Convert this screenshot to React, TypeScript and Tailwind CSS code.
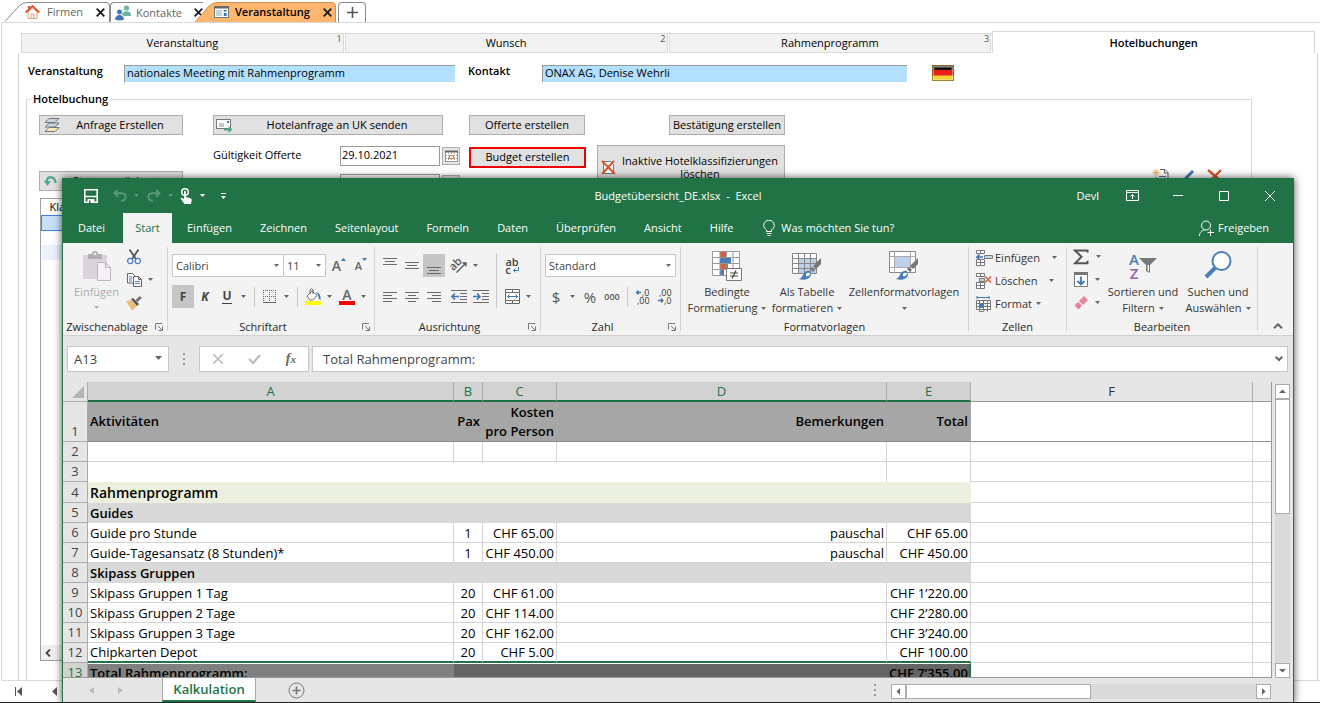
import type { ReactNode } from "react";

interface Row {
  nr: number;
  name: string;
  pax: string;
  cost: string;
  note: string;
  total: string;
  kind?: "empty" | "merged" | "title" | "section";
}

const rows: Row[] = [
  { nr: 2, name: "", pax: "", cost: "", note: "", total: "", kind: "empty" },
  { nr: 3, name: "", pax: "", cost: "", note: "", total: "", kind: "merged" },
  { nr: 4, name: "Rahmenprogramm", pax: "", cost: "", note: "", total: "", kind: "title" },
  { nr: 5, name: "Guides", pax: "", cost: "", note: "", total: "", kind: "section" },
  { nr: 6, name: "Guide pro Stunde", pax: "1", cost: "CHF 65.00", note: "pauschal", total: "CHF 65.00" },
  { nr: 7, name: "Guide-Tagesansatz (8 Stunden)*", pax: "1", cost: "CHF 450.00", note: "pauschal", total: "CHF 450.00" },
  { nr: 8, name: "Skipass Gruppen", pax: "", cost: "", note: "", total: "", kind: "section" },
  { nr: 9, name: "Skipass Gruppen 1 Tag", pax: "20", cost: "CHF 61.00", note: "", total: "CHF 1’220.00" },
  { nr: 10, name: "Skipass Gruppen 2 Tage", pax: "20", cost: "CHF 114.00", note: "", total: "CHF 2’280.00" },
  { nr: 11, name: "Skipass Gruppen 3 Tage", pax: "20", cost: "CHF 162.00", note: "", total: "CHF 3’240.00" },
  { nr: 12, name: "Chipkarten Depot", pax: "20", cost: "CHF 5.00", note: "", total: "CHF 100.00" },
];

const menu = ["Einfügen", "Zeichnen", "Seitenlayout", "Formeln", "Daten", "Überprüfen", "Ansicht", "Hilfe"];

/*-------------------- Small shared pieces ----------------------*/
function Caret({ className = "text-[#666]" }: { className?: string }) {
  return (
    <svg width="5" height="3" viewBox="0 0 5 3" className={`shrink-0 ${className}`}>
      <path d="M0 0h5L2.5 3z" fill="currentColor" />
    </svg>
  );
}

function Cross() {
  return (
    <svg width="9" height="9" viewBox="0 0 9 9" stroke="#1a1a1a" strokeWidth="1.8">
      <path d="M.7.7l7.6 7.6M8.3.7L.7 8.3" />
    </svg>
  );
}

function Launcher() {
  return (
    <svg width="8" height="8" viewBox="0 0 8 8" fill="none" stroke="#777" className="absolute right-1 top-1">
      <path d="M.5 6.5V.5H7M3 3l4 4M7.5 3.5v4h-4" />
    </svg>
  );
}

function Group({ label, className, launcher, children }: { label: string; className: string; launcher?: boolean; children: ReactNode }) {
  return (
    <section className={`flex shrink-0 flex-col ${className}`}>
      <div className="flex h-[76px] w-full">{children}</div>
      <div className={`relative h-4 text-center leading-4 text-[#262626] ${launcher ? "pr-4" : ""}`}>
        {label}
        {launcher && <Launcher />}
      </div>
    </section>
  );
}

function Divider() {
  return <div className="my-1 w-px shrink-0 bg-[#d4d4d4]" />;
}

function Tool({ label, active, className = "w-[22px]", children }: { label: string; active?: boolean; className?: string; children: ReactNode }) {
  return (
    <button aria-label={label} className={`flex h-[23px] shrink-0 items-center justify-center ${active ? "bg-[#c6c6c6]" : ""} ${className}`}>
      {children}
    </button>
  );
}

function Lines({ d }: { d: string }) {
  return (
    <svg width="16" height="16" viewBox="0 0 16 16" stroke="#6a6a6a">
      <path d={d} />
    </svg>
  );
}

function Picker({ label, value, className }: { label: string; value: string; className: string }) {
  return (
    <label className={`relative block h-[23px] border border-[#c6c6c6] bg-white ${className}`}>
      <select aria-label={label} className="h-full w-full appearance-none bg-transparent pl-[3px] text-[#444] outline-none">
        <option>{value}</option>
      </select>
      <span className="pointer-events-none absolute right-1 top-[9px]">
        <Caret />
      </span>
    </label>
  );
}

function Brush() {
  return (
    <>
      <path d="M29 7v6l-5 5-3-3z" fill="#777" />
      <path d="M20 16l3 3-2 2-3-3z" fill="#777" />
      <path d="M18 20c-3-1-6 1-7 4-1 2-2 3-4 4 5 2 11 0 12-4z" fill="#4a7ebb" />
      <path d="M14 23c2-2 4-1 4 0s-2 3-4 2" fill="#fff" />
    </>
  );
}

/*-------------------- Office app behind ----------------------*/
function CalendarButton() {
  return (
    <button aria-label="Kalender" className="flex h-[18px] w-[18px] items-center justify-center border border-[#adadad] bg-[#e6e6e6]">
      <svg width="13" height="13" viewBox="0 0 13 13" fill="none">
        <rect x=".5" y="1.5" width="12" height="10" fill="#fff" stroke="#999" />
        <path d="M0 1.500h13" stroke="#666" strokeWidth="2" />
        <path d="M3.500 3v9M6.500 3v9M9.500 3v9M1 5.500h11M1 8.500h11" stroke="#999" strokeDasharray="1 1" />
        <rect x="4.500" y="5.500" width="4" height="3" fill="#fff" stroke="#e8833a" />
      </svg>
    </button>
  );
}

function AppButton({ className, children }: { className: string; children: ReactNode }) {
  return <button className={`relative h-5 border border-[#adadad] bg-[#e1e1e1] leading-4 ${className}`}>{children}</button>;
}

function WindowTabs() {
  return (
    <nav className="flex h-[22px] items-end text-[#666]">
      <button className="relative ml-[5px] flex h-5 w-[105px] items-center">
        <svg width="105" height="20" viewBox="0 0 105 20" fill="#fff" stroke="#8a8a8a" className="absolute inset-0">
          <path d="M0 19.500L14 4Q18 .5 22 .5H102Q104.500 1 104.500 4V20" />
        </svg>
        <svg width="15" height="14" viewBox="0 0 15 14" className="relative ml-5">
          <path d="M3 7v6.500h9V7L7.500 3z" fill="#fff" stroke="#e0a070" />
          <path d="M.7 7.500L7.500 1l6.800 6.500" fill="none" stroke="#dd5335" strokeWidth="1.800" />
          <path d="M3 1h2v3H3z" fill="#dd5335" />
          <path d="M6 9h3v4.500H6z" fill="#fff" stroke="#e0a070" />
        </svg>
        <span className="relative ml-[7px]">Firmen</span>
        <span className="relative ml-auto mr-[5px]">
          <Cross />
        </span>
      </button>
      <button className="flex h-5 w-[93px] items-center rounded-tl-[4px] border-l border-t border-[#8a8a8a]">
        <svg width="16" height="16" viewBox="0 0 16 16" className="ml-1">
          <circle cx="11.500" cy="3" r="2.600" fill="#6db3a0" />
          <path d="M7 10c0-5 9-5 9 0v1H9z" fill="#6db3a0" />
          <circle cx="4.500" cy="7" r="2.800" fill="#3f74b5" stroke="#fff" strokeWidth=".6" />
          <path d="M0 14.500c0-6 9-6 9 0q-4.500 2-9 0z" fill="#3f74b5" />
        </svg>
        <span className="ml-[5px]">Kontakte</span>
        <span className="ml-auto">
          <Cross />
        </span>
      </button>
      <button className="relative -ml-2 flex h-5 w-[141px] items-center font-semibold text-black">
        <svg width="141" height="20" viewBox="0 0 141 20" fill="#fdb66e" stroke="#c98f55" className="absolute inset-0">
          <path d="M0 20L14 4Q18 .5 22 .5H137Q140.500 .5 140.500 4V20" />
        </svg>
        <svg width="15" height="12" viewBox="0 0 15 12" className="relative ml-[19px]">
          <rect x=".5" y=".5" width="14" height="11" fill="#fff" stroke="#777" />
          <path d="M0 1.500h15" stroke="#666" strokeWidth="2" />
          <path d="M2 5h6M2 7h6M2 9h6" stroke="#8ab" />
          <path d="M10.500 4v1.500M10.500 7v3M12 4v1.500M12 7v3" stroke="#3f74b5" strokeWidth="1.500" />
        </svg>
        <span className="relative ml-1.5">Veranstaltung</span>
        <span className="relative ml-auto mr-1">
          <Cross />
        </span>
      </button>
      <button aria-label="Neuer Tab" className="ml-0.5 flex h-5 w-7 items-center justify-center rounded-t-[4px] border border-b-0 border-[#8a8a8a]">
        <svg width="11" height="11" viewBox="0 0 11 11" stroke="#555" strokeWidth="1.600">
          <path d="M5.500 0v11M0 5.500h11" />
        </svg>
      </button>
    </nav>
  );
}

function PageTab({ label, nr, color = "" }: { label: string; nr: string; color?: string }) {
  return (
    <button className="relative mr-px flex h-5 flex-1 items-center justify-center border border-[#d9d9d9] bg-[#f2f2f2]">
      {label}
      <sup className={`absolute right-px top-0 text-[9px] leading-[9px] text-[#555] ${color}`}>{nr}</sup>
    </button>
  );
}

function EventForm() {
  return (
    <fieldset className="ml-[7px] mr-[65px] mt-[9px] flex min-w-0 flex-1 flex-col border border-b-0 border-[#d9d9d9]">
      <legend className="ml-1 px-0.5 font-semibold leading-4">Hotelbuchung</legend>
      <div className="ml-3 mt-2 flex h-[83px] items-start">
        <div className="flex w-[174px] flex-col gap-9">
          <AppButton className="w-[144px] pl-[18px]">
            <svg width="18" height="16" viewBox="0 0 18 16" stroke="#777" className="absolute left-[3px] top-px">
              <path d="M6 10.500h10l-4 4H2z" fill="#f7ecb5" />
              <path d="M6 6h10l-4 4H2z" fill="#c5d5e8" />
              <path d="M6 1.500h10l-4 4H2z" fill="#c5d5e8" />
            </svg>
            Anfrage Erstellen
          </AppButton>
          <AppButton className="w-[144px] pl-[26px]">
            <svg width="14" height="12" viewBox="0 0 14 12" fill="none" className="absolute left-1 top-[3px]">
              <path d="M2.500 7C3 0 11 1 11.500 8" stroke="#55a892" strokeWidth="2.400" />
              <path d="M0 6h7l-3.500 5z" fill="#55a892" />
            </svg>
            Status zurücksetzen
          </AppButton>
        </div>
        <div className="flex w-64 flex-col">
          <AppButton className="w-[230px] pl-[18px]">
            <svg width="18" height="15" viewBox="0 0 18 15" className="absolute left-[2px] top-[2px]">
              <rect x=".5" y="1.500" width="14" height="9" fill="#fff" stroke="#777" />
              <path d="M3 6h5M3 8h5" stroke="#888" />
              <rect x="11" y="3" width="2" height="2" fill="#3f74b5" />
              <path d="M8 11.500h6" stroke="#4fa88c" strokeWidth="2" />
              <path d="M12.500 8l4 3.500-4 3.500z" fill="#4fa88c" />
            </svg>
            Hotelanfrage an UK senden
          </AppButton>
          <div className="mt-[11px] flex items-center">
            <label htmlFor="validity" className="w-[127px] pb-0.5">
              Gültigkeit Offerte
            </label>
            <input id="validity" defaultValue="29.10.2021" className="mr-[2px] h-5 w-[100px] border border-[#999] bg-white px-px pb-[3px] outline-none" />
            <CalendarButton />
          </div>
          <div className="mt-2 flex items-center">
            <label htmlFor="reply" className="w-[127px]">
              Rückmeldung bis
            </label>
            <input id="reply" className="mr-[2px] h-5 w-[100px] border border-[#999] bg-white outline-none" />
            <CalendarButton />
          </div>
        </div>
        <div className="flex w-32 flex-col">
          <AppButton className="w-[116px]">Offerte erstellen</AppButton>
          <button className="mt-3 h-[21px] w-[117px] border-2 border-[#f00000] bg-[#e1e1e1] pb-px leading-4">Budget erstellen</button>
        </div>
        <div className="flex w-[188px] flex-col items-end">
          <AppButton className="w-[116px]">Bestätigung erstellen</AppButton>
          <button className="relative mt-2.5 h-11 w-full border border-[#adadad] bg-[#e1e1e1] pl-[18px] leading-[13px]">
            <svg width="15" height="15" viewBox="0 0 15 15" className="absolute left-[3px] top-3.5">
              <path d="M2.500 1.500h7l3 3v9h-10z" fill="#fff" stroke="#777" />
              <path d="M1 1l13 13M13 1L1 14" stroke="#d9532c" strokeWidth="2" />
            </svg>
            Inaktive Hotelklassifizierungen löschen
          </button>
        </div>
        <div className="ml-auto mr-7 flex items-start gap-3 self-end">
          <button aria-label="Neu">
            <svg width="17" height="30" viewBox="0 0 17 30" fill="none">
              <path d="M4 1v7M.5 4.500h7M1.500 2l5 5M6.500 2l-5 5" stroke="#f0b060" />
              <path d="M8 1.500h5l3 3V16H4V9M12.500 1.500V5H16" stroke="#666" />
              <path d="M7 8.500h7M7 11.500h7" stroke="#3f74b5" />
            </svg>
          </button>
          <button aria-label="Bearbeiten">
            <svg width="14" height="30" viewBox="0 0 14 30">
              <path d="M11 2l2 2-9 9-3 1 1-3z" fill="#3f74b5" />
            </svg>
          </button>
          <button aria-label="Löschen">
            <svg width="16" height="30" viewBox="0 0 16 30" stroke="#d9532c" strokeWidth="2.400">
              <path d="M1 2l13 11M14 2L2 14" />
            </svg>
          </button>
        </div>
      </div>
      <div className="ml-[13px] mr-5 flex flex-1 flex-col border border-b-0 border-[#a0a0a0]">
        <table className="w-full text-left">
          <thead>
            <tr className="h-4">
              <th className="pl-2 font-normal leading-[15px]">Klassifizierung</th>
            </tr>
          </thead>
          <tbody>
            <tr className="h-[15px]">
              <td className="border border-[#3a84dc] bg-[#c7dff7]" />
            </tr>
            <tr className="h-[15px]">
              <td />
            </tr>
            <tr className="h-[15px]">
              <td className="bg-[#e9f2fd]" />
            </tr>
          </tbody>
        </table>
        <div className="mt-auto flex h-[15px] items-center bg-[#f0f0f0] pl-1">
          <svg width="6" height="8" viewBox="0 0 6 8" fill="none" stroke="#444" strokeWidth="1.800">
            <path d="M5 .5L1.500 4 5 7.500" />
          </svg>
        </div>
      </div>
      <div className="ml-[13px] mr-5 h-5 border-t border-[#a0a0a0]" />
    </fieldset>
  );
}

function OfficeApp() {
  return (
    <div className="flex h-full flex-col">
      <WindowTabs />
      <div className="ml-px flex flex-1 flex-col border border-r-0 border-[#d9d9d9]">
        <div className="ml-[19px] mr-[5px] mt-2 flex h-[22px] items-end">
          <PageTab label="Veranstaltung" nr="1" color="text-[#3f74b5]" />
          <PageTab label="Wunsch" nr="2" />
          <PageTab label="Rahmenprogramm" nr="3" />
          <button className="h-[22px] flex-1 border border-b-0 border-[#d9d9d9] bg-white font-semibold">Hotelbuchungen</button>
        </div>
        <div className="ml-4 mr-0.5 flex flex-1 flex-col border-x border-[#d9d9d9]">
          <div className="ml-[9px] mt-[11px] flex h-[18px] items-center">
            <label htmlFor="event" className="w-24 pb-1 font-semibold">
              Veranstaltung
            </label>
            <input
              id="event"
              defaultValue="nationales Meeting mit Rahmenprogramm"
              className="h-[17px] w-[331px] border-l border-t border-[#999] bg-[#b3e0ff] px-[2px] pb-0.5 outline-none"
            />
            <label htmlFor="contact" className="ml-[13px] w-[74px] pb-1 font-semibold">
              Kontakt
            </label>
            <input
              id="contact"
              defaultValue="ONAX AG, Denise Wehrli"
              className="h-[17px] w-[365px] border-l border-t border-[#999] bg-[#b3e0ff] px-[2px] pb-0.5 outline-none"
            />
            <svg width="22" height="16" viewBox="0 0 22 16" className="ml-[25px]">
              <path d="M0 0h22v6H0z" fill="#4a4a42" />
              <path d="M0 5h22v6H0z" fill="#e8201c" />
              <path d="M0 10.500h22V16H0z" fill="#f7cf2e" />
              <path d="M3 3h16v2H3z" fill="#111" />
              <rect x=".5" y=".5" width="21" height="15" fill="none" stroke="#8a6d20" opacity=".8" />
              <rect x="1.500" y="1.500" width="19" height="13" fill="none" stroke="#fff" opacity=".35" />
            </svg>
          </div>
          <EventForm />
        </div>
      </div>
      <div className="flex h-[22px] shrink-0 items-center gap-7 border-b border-[#222] pl-[15px]">
        <svg width="8" height="9" viewBox="0 0 8 9" fill="#555">
          <path d="M0 0h1v9H0zM7 0v9L2 4.500z" />
        </svg>
        <svg width="6" height="9" viewBox="0 0 6 9" fill="#555">
          <path d="M6 0v9L1 4.500z" />
        </svg>
      </div>
    </div>
  );
}

/*-------------------- Excel title bar and menu ----------------------*/
function TitleBar() {
  return (
    <header className="grid h-[35px] grid-cols-[1fr_auto_1fr] items-center text-white">
      <div className="flex items-center pl-[22px]">
        <button aria-label="Speichern" className="mr-[15px]">
          <svg width="14" height="14" viewBox="0 0 14 14" fill="none" stroke="#fff" strokeWidth="1.600">
            <path d="M.8.8h12.400v12.400H.8zM.8 7.500h12.400" />
            <path d="M3.500 10h7v4h-7z" fill="#fff" stroke="none" />
            <path d="M5 11.500h1.500V14H5z" fill="#217346" stroke="none" />
          </svg>
        </button>
        <button aria-label="Rückgängig" className="flex items-center gap-[7px]">
          <svg width="14" height="13" viewBox="0 0 14 13" fill="none" stroke="#5a967a" strokeWidth="2">
            <path d="M5 .7L1.500 4.200 5 7.700M2 4.200h7c5 0 5 7.500-1 7.500" />
          </svg>
          <Caret className="text-[#5a967a]" />
        </button>
        <button aria-label="Wiederholen" className="ml-2 flex items-center gap-[7px]">
          <svg width="14" height="13" viewBox="0 0 14 13" fill="none" stroke="#5a967a" strokeWidth="2">
            <path d="M9 .7l3.500 3.500L9 7.700M12 4.200H5c-5 0-5 7.500 1 7.500" />
          </svg>
          <Caret className="text-[#5a967a]" />
        </button>
        <button aria-label="Fingereingabe" className="ml-[7px] flex items-center gap-2">
          <svg width="12" height="16" viewBox="0 0 12 16">
            <circle cx="5" cy="4" r="3.300" fill="none" stroke="#fff" strokeWidth="1.500" />
            <path d="M4 3.500q1-1.500 2 0V9l5 1.500q1 .5 .7 2L11 16H4.500L.5 10.500q1-1.500 2.200-.3L4 11z" fill="#fff" />
          </svg>
          <Caret className="text-white" />
        </button>
        <button aria-label="Anpassen" className="ml-4">
          <svg width="5" height="6" viewBox="0 0 5 6" fill="#fff">
            <path d="M0 0h5v1H0zM0 3h5L2.500 6z" />
          </svg>
        </button>
      </div>
      <h1>Budgetübersicht_DE.xlsx&nbsp; -&nbsp; Excel</h1>
      <div className="flex items-center justify-end pr-[1px]">
        <span className="mr-2.5">Devl</span>
        <button aria-label="Menüband-Anzeigeoptionen" className="flex w-[46px] justify-center">
          <svg width="13" height="11" viewBox="0 0 13 11" fill="none" stroke="#fff">
            <path d="M.5.5h12v10H.5zM.5 2.500h12M6.500 9V4.500M4.500 6.500l2-2 2 2" />
          </svg>
        </button>
        <button aria-label="Minimieren" className="flex w-[46px] justify-center">
          <svg width="10" height="10" viewBox="0 0 10 10" stroke="#fff">
            <path d="M0 4.500h10" />
          </svg>
        </button>
        <button aria-label="Maximieren" className="flex w-[46px] justify-center">
          <svg width="10" height="10" viewBox="0 0 10 10" fill="none" stroke="#fff">
            <path d="M.5.5h9v9h-9z" />
          </svg>
        </button>
        <button aria-label="Schließen" className="flex w-[46px] justify-center">
          <svg width="10" height="10" viewBox="0 0 10 10" stroke="#fff">
            <path d="M0 0l10 10M10 0L0 10" />
          </svg>
        </button>
      </div>
    </header>
  );
}

function MenuBar() {
  return (
    <nav className="flex h-[30px] items-stretch text-white">
      <button className="w-[61px] pr-[2px]">Datei</button>
      <button className="mr-px w-[49px] bg-[#f3f3f3] text-[#217346]">Start</button>
      {menu.map((item) => (
        <button key={item} className="px-[14px]">
          {item}
        </button>
      ))}
      <button className="ml-4 flex items-center gap-1.5">
        <svg width="12" height="17" viewBox="0 0 12 17" fill="none" stroke="#fff">
          <path d="M3.500 11.500V10C2 8.500.7 7.500.7 5.500a5.300 5.300 0 0110.600 0C11.300 7.500 10 8.500 8.500 10v1.500zM3.500 13.500h5M4.500 15.500h3" />
        </svg>
        Was möchten Sie tun?
      </button>
      <button className="ml-auto mr-[25px] flex items-center gap-1">
        <svg width="15" height="17" viewBox="0 0 15 17" fill="none" stroke="#fff">
          <circle cx="7" cy="5.500" r="4.500" />
          <path d="M.5 16c0-4 2.500-5.500 5-6M11.500 9.500v6.500M8.500 12.500h6.500" />
        </svg>
        Freigeben
      </button>
    </nav>
  );
}

/*-------------------- Ribbon groups ----------------------*/
function ClipboardGroup() {
  return (
    <Group label="Zwischenablage" className="w-[104px]" launcher>
      <button className="ml-[7px] flex w-[53px] flex-col items-center pt-2 text-[#ababab]">
        <svg width="30" height="30" viewBox="0 0 30 30">
          <path d="M1 4h24v24H1z" fill="#d8d4da" />
          <path d="M6 3h4q0-3 3-3t3 3h4v5H6z" fill="#b0b0b0" />
          <circle cx="13" cy="3" r="1.200" fill="#f3f3f3" />
          <path d="M15.500 11.500h8l5 5v13h-13zM23.500 11.500v5h5" fill="#f5f0f8" stroke="#b8b8b8" />
        </svg>
        <span className="mt-0.5 leading-[18px]">Einfügen</span>
        <span className="mt-[5px] flex">
          <Caret className="text-[#b0b0b0]" />
        </span>
      </button>
      <div className="flex flex-col pt-0.5">
        <Tool label="Ausschneiden">
          <svg width="14" height="16" viewBox="0 0 14 16" fill="none" strokeWidth="1.300">
            <path d="M2.500.5L9 10M11.500.5L5 10" stroke="#555" strokeWidth="1.800" />
            <circle cx="3.200" cy="12" r="2.600" stroke="#4a7ebb" />
            <circle cx="10.800" cy="12" r="2.600" stroke="#4a7ebb" />
          </svg>
        </Tool>
        <div className="flex items-center">
          <Tool label="Kopieren">
            <svg width="15" height="14" viewBox="0 0 15 14" fill="#fff" stroke="#666">
              <path d="M.5.5h5l2 2V10h-7z" />
              <path d="M6.500 3.500h5l3 3v7h-8zM11.500 3.500v3h3" />
              <path d="M2 4h3M2 6h3M2 8h3M8 8.500h5M8 10.500h5" stroke="#4a7ebb" />
            </svg>
          </Tool>
          <span className="ml-[3px]">
            <Caret />
          </span>
        </div>
        <Tool label="Format übertragen">
          <svg width="16" height="14" viewBox="0 0 16 14">
            <path d="M0 5l5-1 6 6-5 5z" fill="#eabf79" />
            <path d="M5 3l2-1 6 6-2 2z" fill="#555" />
            <path d="M9.500 4l4-4L16 2l-4.500 4z" fill="#777" />
          </svg>
        </Tool>
      </div>
    </Group>
  );
}

function FontGroup() {
  return (
    <Group label="Schriftart" className="w-[206px]" launcher>
      <div className="flex flex-col gap-2 pl-1 pt-[11px]">
        <div className="flex items-center">
          <Picker label="Schriftart" value="Calibri" className="w-[112px]" />
          <Picker label="Schriftgrad" value="11" className="-ml-px w-[43px]" />
          <Tool label="Schrift vergrößern" className="ml-0.5 w-[22px] text-[14px] font-semibold text-[#666]">
            A
            <svg width="5" height="3" viewBox="0 0 5 3" className="mb-3">
              <path d="M0 3h5L2.500 0z" fill="#3f74b5" />
            </svg>
          </Tool>
          <Tool label="Schrift verkleinern" className="w-[22px] text-[11px] font-semibold text-[#666]">
            A
            <svg width="5" height="3" viewBox="0 0 5 3" className="mb-3">
              <path d="M0 0h5L2.500 3z" fill="#3f74b5" />
            </svg>
          </Tool>
        </div>
        <div className="flex items-center text-[12px] text-[#444]">
          <Tool label="Fett" active>
            <b>F</b>
          </Tool>
          <Tool label="Kursiv">
            <b className="italic">K</b>
          </Tool>
          <Tool label="Unterstrichen">
            <b className="border-b border-[#444] leading-[14px]">U</b>
          </Tool>
          <span className="ml-[3px]">
            <Caret />
          </span>
          <div className="ml-2 h-5 w-px bg-[#c8c8c8]" />
          <Tool label="Rahmen" className="ml-1 w-[22px]">
            <svg width="14" height="14" viewBox="0 0 14 14" stroke="#666" strokeDasharray="1 1">
              <path d="M.5 0v12M6.500 0v12M12.500 0v12M0 .5h13M0 6.500h13" />
              <path d="M0 12.500h13" strokeDasharray="none" />
            </svg>
          </Tool>
          <span className="ml-[3px]">
            <Caret />
          </span>
          <div className="ml-2 h-5 w-px bg-[#c8c8c8]" />
          <Tool label="Füllfarbe" className="ml-1 w-[22px]">
            <svg width="16" height="17" viewBox="0 0 16 17">
              <path d="M2 8l5-5 5 4.500-4.500 4.500H5z" fill="#fff" stroke="#666" />
              <path d="M5 6V2q1.500-2.500 3 0v4" fill="none" stroke="#666" />
              <path d="M11 4q5 1 4.500 8-1.500 0-2.500-5z" fill="#3f74b5" />
              <path d="M0 13h16v4H0z" fill="#ff0" />
            </svg>
          </Tool>
          <span className="ml-[3px]">
            <Caret />
          </span>
          <Tool label="Schriftfarbe" className="ml-1 w-[22px] flex-col">
            <span className="text-[14px] font-semibold leading-[13px] text-[#666]">A</span>
            <span className="h-1 w-4 bg-[#f00]" />
          </Tool>
          <span className="ml-[3px]">
            <Caret />
          </span>
        </div>
      </div>
    </Group>
  );
}

function AlignGroup() {
  return (
    <Group label="Ausrichtung" className="w-[165px]" launcher>
      <div className="flex w-[117px] flex-col gap-2 pl-1 pt-[11px]">
        <div className="flex items-center">
          <Tool label="Oben ausrichten">
            <Lines d="M1 .5h14M3 3.500h10M1 6.500h14" />
          </Tool>
          <Tool label="Zentriert ausrichten">
            <Lines d="M1 4.500h14M3 7.500h10M1 10.500h14" />
          </Tool>
          <Tool label="Unten ausrichten" active>
            <Lines d="M1 9.500h14M3 12.500h10M1 15.500h14" />
          </Tool>
          <Tool label="Ausrichtung" className="ml-[3px] w-[22px]">
            <svg width="17" height="16" viewBox="0 0 17 16" fill="none" stroke="#555" className="overflow-visible">
              <path d="M5.500 14.500L15 5M11.500 5H15v3.500" strokeWidth="1.300" />
              <text x="0" y="10" fontSize="11" fill="#555" stroke="none" transform="rotate(-45 5 9)" className="font-semibold">
                ab
              </text>
            </svg>
          </Tool>
          <span className="ml-[3px]">
            <Caret />
          </span>
        </div>
        <div className="flex items-center">
          <Tool label="Linksbündig">
            <Lines d="M1 3.500h14M1 6.500h9M1 9.500h14M1 12.500h9" />
          </Tool>
          <Tool label="Zentriert">
            <Lines d="M1 3.500h14M4 6.500h8M1 9.500h14M4 12.500h8" />
          </Tool>
          <Tool label="Rechtsbündig">
            <Lines d="M1 3.500h14M6 6.500h9M1 9.500h14M6 12.500h9" />
          </Tool>
          <Tool label="Einzug verkleinern" className="ml-[3px] w-[22px]">
            <svg width="16" height="14" viewBox="0 0 16 14" stroke="#6a6a6a" fill="none">
              <path d="M0 .5h16M9 3.500h7M9 6.500h7M9 9.500h7M0 12.500h16" />
              <path d="M8 6.500H1.500M4 3.500l-3 3 3 3" stroke="#3f74b5" strokeWidth="1.600" />
            </svg>
          </Tool>
          <Tool label="Einzug vergrößern">
            <svg width="16" height="14" viewBox="0 0 16 14" stroke="#6a6a6a" fill="none">
              <path d="M0 .5h16M9 3.500h7M9 6.500h7M9 9.500h7M0 12.500h16" />
              <path d="M0 6.500h6.500M4 3.500l3 3-3 3" stroke="#3f74b5" strokeWidth="1.600" />
            </svg>
          </Tool>
        </div>
      </div>
      <div className="ml-1 mt-2.5 h-[55px] w-px bg-[#c8c8c8]" />
      <div className="flex flex-col gap-2 pl-1 pt-[11px]">
        <Tool label="Textumbruch" className="relative w-[22px] flex-col text-[11px] font-semibold text-[#444]">
          <span className="h-2 leading-[8px]">ab</span>
          <span className="flex h-2 items-center gap-0.5 leading-[8px]">
            c
            <svg width="6" height="6" viewBox="0 0 6 6" fill="none" stroke="#3f74b5">
              <path d="M5.500 0v3.500H1M2.500 1.500l-2 2 2 2" />
            </svg>
          </span>
        </Tool>
        <div className="flex items-center">
          <Tool label="Verbinden und zentrieren">
            <svg width="15" height="15" viewBox="0 0 15 15" fill="#fff" stroke="#6a6a6a">
              <path d="M.5.5h14v14H.5zM.5 3.500h14M.5 11.500h14M7.500 .5v3M7.500 11.500v3" />
              <path d="M2.500 7.500h10M4.500 5.500l-2 2 2 2M10.500 5.500l2 2-2 2" stroke="#3f74b5" fill="none" />
            </svg>
          </Tool>
          <span className="ml-[3px]">
            <Caret />
          </span>
        </div>
      </div>
    </Group>
  );
}

function NumberGroup() {
  return (
    <Group label="Zahl" className="w-[139px]" launcher>
      <div className="flex flex-1 flex-col gap-2 px-1 pt-[11px]">
        <Picker label="Zahlenformat" value="Standard" className="w-full" />
        <div className="flex items-center text-[#555]">
          <Tool label="Währung" className="w-[22px] text-[15px]">
            $
          </Tool>
          <span className="ml-[3px] mr-1.5">
            <Caret />
          </span>
          <Tool label="Prozent" className="w-[18px] text-[15px]">
            %
          </Tool>
          <Tool label="Tausender" className="mr-0.5 w-[26px] text-[9px] font-semibold">
            000
          </Tool>
          <div className="h-5 w-px bg-[#c8c8c8]" />
          <Tool label="Dezimalstelle hinzufügen" className="ml-1 w-[22px]">
            <svg width="16" height="16" viewBox="0 0 16 16" fontSize="9" fill="#333" className="overflow-visible">
              <text x="7" y="7">,0</text>
              <text x="2" y="15">,00</text>
              <path d="M1 3.500h5M3.500 1.500l-2 2 2 2" stroke="#3f74b5" strokeWidth="1.300" fill="none" />
            </svg>
          </Tool>
          <Tool label="Dezimalstelle löschen">
            <svg width="16" height="16" viewBox="0 0 16 16" fontSize="9" fill="#333" className="overflow-visible">
              <text x="2" y="7">,00</text>
              <text x="7" y="15">,0</text>
              <path d="M1 11.500h5M4 9.500l2 2-2 2" stroke="#3f74b5" strokeWidth="1.300" fill="none" />
            </svg>
          </Tool>
        </div>
      </div>
    </Group>
  );
}

function BigButton({ className, lines, icon }: { className: string; lines: [string, string]; icon: ReactNode }) {
  return (
    <button className={`flex shrink-0 flex-col items-center whitespace-nowrap pt-2 leading-4 text-[#333] ${className}`}>
      {icon}
      <span className="mt-[3px]">{lines[0]}</span>
      <span className="flex h-4 items-center gap-1">
        {lines[1]}
        <Caret />
      </span>
    </button>
  );
}

function StylesGroup() {
  return (
    <Group label="Formatvorlagen" className="w-[287px]">
      <BigButton
        className="ml-1 w-[84px]"
        lines={["Bedingte", "Formatierung"]}
        icon={
          <svg width="30" height="30" viewBox="0 0 30 30">
            <path d="M.5.5h27v24H.5z" fill="#fff" />
            <path d="M8 1h6v5H8zM8 13h8v5H8z" fill="#d9603b" />
            <path d="M8 19h4v5H8z" fill="#4a7ebb" />
            <path d="M.5.5h27v24H.5zM8 .5v24M14.500 .5v24M21 .5v24M.5 6.500h27M.5 12.500h27M.5 18.500h27" fill="none" stroke="#999" />
            <path d="M8 7h11v5H8z" fill="#4a7ebb" />
            <path d="M14.500 17.500h15v12h-15z" fill="#fff" stroke="#777" />
            <path d="M18 22h8M18 25h8M24 19.500l-4 8" stroke="#444" strokeWidth="1.200" />
          </svg>
        }
      />
      <BigButton
        className="w-[76px]"
        lines={["Als Tabelle", "formatieren"]}
        icon={
          <svg width="30" height="30" viewBox="0 0 30 30">
            <path d="M.5 2.500h24v20H.5z" fill="#fff" />
            <path d="M7 8h17v14H7z" fill="#bdd0e8" />
            <path d="M.5 2.500h24v20H.5zM6.500 2.500v20M12.500 2.500v20M18.500 2.500v20M.5 7.500h24M.5 12.500h24M.5 17.500h24" fill="none" stroke="#888" />
            <Brush />
          </svg>
        }
      />
      <BigButton
        className="w-[118px]"
        lines={["Zellenformatvorlagen", ""]}
        icon={
          <svg width="30" height="30" viewBox="0 0 30 30">
            <path d="M.5.5h26v21H.5z" fill="#fff" stroke="#888" />
            <path d="M6 5.500h15v11H6z" fill="#bdd0e8" />
            <path d="M5.500 .5v21M21.500 .5v21M.5 5.500h26M.5 16.500h26" fill="none" stroke="#aaa" />
            <Brush />
          </svg>
        }
      />
    </Group>
  );
}

function CellRow({ label, className, icon }: { label: string; className: string; icon: ReactNode }) {
  return (
    <button className={`flex h-[23px] items-center text-[#333] ${className}`}>
      <svg width="17" height="16" viewBox="0 0 17 16" fill="#fff" stroke="#777" className="mr-0.5">
        {icon}
      </svg>
      {label}
      <span className="ml-auto">
        <Caret />
      </span>
    </button>
  );
}

function CellsGroup() {
  return (
    <Group label="Zellen" className="w-[97px]">
      <div className="flex flex-col pl-[7px] pt-[3px]">
        <CellRow
          label="Einfügen"
          className="w-[81px]"
          icon={
            <>
              <path d="M.5 .5h4v3h-4zM4.500 .5h4v3h-4zM.5 9.500h4v3h-4zM4.500 9.500h4v3h-4zM.5 12.500h4v3h-4zM4.500 12.500h4v3h-4z" />
              <path d="M8.500 5.500h8v3h-8z" fill="#c5d5e8" />
              <path d="M7 7H1M3.500 4.500L1 7l2.500 2.500" stroke="#3f74b5" strokeWidth="1.600" fill="none" />
            </>
          }
        />
        <CellRow
          label="Löschen"
          className="w-[78px]"
          icon={
            <>
              <path d="M.5 .5h4v3h-4zM4.500 .5h4v3h-4zM.5 9.500h4v3h-4zM4.500 9.500h4v3h-4zM.5 12.500h4v3h-4zM4.500 12.500h4v3h-4z" />
              <path d="M3.500 5.500h5v3h-5z" fill="#c5d5e8" />
              <path d="M9 3.500l6 6M15 3.500l-6 6" stroke="#d9603b" strokeWidth="1.600" />
            </>
          }
        />
        <CellRow
          label="Format"
          className="w-[65px]"
          icon={
            <>
              <path d="M.5 4.500h14v9h-14zM.5 7.500h14M.5 10.500h14M3.500 4.500v9M7.500 4.500v9M11.500 4.500v9M3.500 13.500v2h4l1-2h3v2" />
              <path d="M3.500 7.500h4v4h-4z" fill="#3f74b5" />
              <path d="M1 1.500h12M1 0v3M13 0v3" stroke="#3f74b5" />
            </>
          }
        />
      </div>
    </Group>
  );
}

function EditGroup() {
  return (
    <Group label="Bearbeiten" className="w-[190px]">
      <div className="flex w-9 flex-col pl-[3px] pt-0.5">
        <div className="flex items-center">
          <Tool label="Summe">
            <svg width="16" height="16" viewBox="0 0 16 16" fill="none" stroke="#555" strokeWidth="2">
              <path d="M14.500 3.500V1.500H2l6.500 6.300L2 14.300h12.500v-2.500" />
            </svg>
          </Tool>
          <span className="ml-1">
            <Caret />
          </span>
        </div>
        <div className="flex items-center">
          <Tool label="Ausfüllen">
            <svg width="14" height="15" viewBox="0 0 14 15" fill="none">
              <path d="M.5.5h13v14H.5z" fill="#fff" stroke="#777" />
              <path d="M0 1.500h14" stroke="#777" strokeWidth="3" />
              <path d="M7 4.500v8M3.500 9L7 12.500 10.500 9" stroke="#3f74b5" strokeWidth="1.800" />
            </svg>
          </Tool>
          <span className="ml-[3px]">
            <Caret />
          </span>
        </div>
        <div className="flex items-center">
          <Tool label="Löschen">
            <svg width="13" height="13" viewBox="0 0 13 13" fill="#e8819a">
              <path d="M4 5l5-5 4 4-5 5zM0 9l3-3.200 4 4L4 13H3L0 10z" />
            </svg>
          </Tool>
          <span className="ml-[3px]">
            <Caret />
          </span>
        </div>
      </div>
      <BigButton
        className="w-[80px]"
        lines={["Sortieren und", "Filtern"]}
        icon={
          <span className="flex h-[30px] items-center">
            <span className="flex flex-col text-[15px] font-semibold leading-[14px]">
              <span className="text-[#4a7ebb]">A</span>
              <span className="text-[#8e5fb5]">Z</span>
            </span>
            <svg width="18" height="16" viewBox="0 0 18 16">
              <path d="M0 0h18l-7 7v8l-4-2V7z" fill="#777" />
              <path d="M8.500 7v5.500l1.500 1V7z" fill="#fff" />
            </svg>
          </span>
        }
      />
      <BigButton
        className="w-[70px]"
        lines={["Suchen und", "Auswählen"]}
        icon={
          <svg width="30" height="30" viewBox="0 0 30 30" fill="none" stroke="#4a7ebb">
            <path d="M12 17L3 26" strokeWidth="4" />
            <circle cx="18.500" cy="10" r="9" strokeWidth="2" fill="#fff" />
          </svg>
        }
      />
    </Group>
  );
}

function Ribbon() {
  return (
    <div className="flex h-[93px] shrink-0 overflow-hidden border-b border-[#d0d0d0] bg-[#f3f3f3]">
      <ClipboardGroup />
      <Divider />
      <FontGroup />
      <Divider />
      <AlignGroup />
      <Divider />
      <NumberGroup />
      <Divider />
      <StylesGroup />
      <Divider />
      <CellsGroup />
      <Divider />
      <EditGroup />
      <Divider />
      <button aria-label="Menüband reduzieren" className="ml-auto mr-[10px] mt-auto pb-[6px]">
        <svg width="10" height="6" viewBox="0 0 10 6" fill="none" stroke="#666" strokeWidth="2">
          <path d="M1 5.300l4-4 4 4" />
        </svg>
      </button>
    </div>
  );
}

function FormulaBar() {
  return (
    <div className="flex h-[46px] shrink-0 items-start bg-[#e6e6e6] pl-1 pr-[5px] pt-[10px] text-[13px] text-[#444]">
      <label className="relative block h-[26px] w-[102px] shrink-0 border border-[#c6c6c6] bg-white">
        <input aria-label="Namenfeld" defaultValue="A13" className="h-full w-full bg-transparent pl-1.5 outline-none" />
        <svg width="7" height="4" viewBox="0 0 7 4" className="absolute right-1.5 top-[9px]">
          <path d="M0 0h7L3.500 4z" fill="#666" />
        </svg>
      </label>
      <svg width="2" height="12" viewBox="0 0 2 12" fill="#999" className="mx-[14px] mt-[7px]">
        <path d="M0 0h2v2H0zM0 5h2v2H0zM0 10h2v2H0z" />
      </svg>
      <div className="flex h-[26px] w-[110px] shrink-0 items-center justify-between border border-[#c6c6c6] bg-white px-3">
        <button aria-label="Abbrechen">
          <svg width="12" height="10" viewBox="0 0 12 10" stroke="#bbb" strokeWidth="1.600">
            <path d="M1 0l10 10M11 0L1 10" />
          </svg>
        </button>
        <button aria-label="Eingeben">
          <svg width="13" height="10" viewBox="0 0 13 10" fill="none" stroke="#bbb" strokeWidth="2.200">
            <path d="M1 5l4 4 7-8" />
          </svg>
        </button>
        <button aria-label="Funktion einfügen" className="font-['Liberation_Serif',serif] text-[14px] font-bold italic leading-5 text-[#666]">
          f<span className="text-[11px]">x</span>
        </button>
      </div>
      <label className="relative ml-[3px] block h-[26px] flex-1 border border-[#c6c6c6] bg-white">
        <input aria-label="Bearbeitungsleiste" defaultValue="Total Rahmenprogramm:" className="h-full w-full bg-transparent pl-2.5 outline-none" />
        <svg width="8" height="6" viewBox="0 0 8 6" fill="none" stroke="#666" strokeWidth="2" className="absolute right-1 top-[9px]">
          <path d="M.7 .7L4 4l3.300-3.300" />
        </svg>
      </label>
    </div>
  );
}

/*-------------------- Sheet ----------------------*/
function RowHead({ nr, active }: { nr: number; active?: boolean }) {
  return (
    <th
      className={`border-b border-r border-[#ababab] p-0 text-center align-bottom font-normal leading-[19px] ${
        active ? "bg-[#d2d2d2] text-[#217346]" : "bg-[#e6e6e6] text-[#444]"
      }`}>
      {nr}
    </th>
  );
}

function SheetRow({ row }: { row: Row }) {
  const last = row.nr === 12;
  const line = last ? "border-b-2 border-b-[#217346]" : "border-b border-b-[#d4d4d4]";
  const cell = `border-r border-r-[#d4d4d4] px-[2px] py-0 leading-[18px] ${line}`;
  const blank = "border-b border-r border-[#d4d4d4] p-0";

  return (
    <tr className={row.nr === 4 ? "h-[21px]" : "h-5"}>
      <RowHead nr={row.nr} />
      {row.kind === "title" && (
        <td colSpan={5} className="bg-[#ebf1de] px-[2px] py-0 text-[14px] font-semibold leading-[20px]">
          {row.name}
        </td>
      )}
      {row.kind === "section" && (
        <td colSpan={5} className="bg-[#d9d9d9] px-[2px] py-0 font-semibold leading-[19px]">
          {row.name}
        </td>
      )}
      {row.kind === "merged" && (
        <>
          <td colSpan={4} className="border-r border-[#d4d4d4] p-0" />
          <td className="border-r border-[#d4d4d4] p-0" />
        </>
      )}
      {(!row.kind || row.kind === "empty") && (
        <>
          <td className={cell}>{row.name}</td>
          <td className={`text-center ${cell}`}>{row.pax}</td>
          <td className={`text-right ${cell}`}>{row.cost}</td>
          <td className={`text-right ${cell}`}>{row.note}</td>
          <td className={`text-right ${cell}`}>{row.total}</td>
        </>
      )}
      <td className={blank} />
      <td className="border-b border-[#d4d4d4] p-0" />
    </tr>
  );
}

function Sheet() {
  const head = "border-b-2 border-b-[#217346] border-r border-r-[#ababab] bg-[#d2d2d2] p-0 font-normal leading-[18px] text-[#217346]";
  const top = "border-b border-[#8c8c8c] bg-[#a6a6a6] py-0 pl-[2px] pr-[3px] font-semibold leading-[19px]";
  const plain = "border-b border-[#999] bg-[#e6e6e6] p-0 font-normal leading-[19px] text-[#333]";
  const sum = "border-t border-t-white bg-[#646464] px-[2px] py-0 font-semibold leading-[19px]";

  return (
    <table className="w-full table-fixed border-separate border-spacing-0 whitespace-nowrap bg-white text-[13px] text-black">
      <colgroup>
        <col className="w-[25px]" />
        <col className="w-[366px]" />
        <col className="w-[29px]" />
        <col className="w-[74px]" />
        <col className="w-[330px]" />
        <col className="w-[84px]" />
        <col className="w-[282px]" />
        <col />
      </colgroup>
      <thead>
        <tr className="h-5">
          <th aria-label="Alles markieren" className="border-b border-r border-[#ababab] bg-[#e6e6e6] p-0">
            <svg width="12" height="12" viewBox="0 0 12 12" className="ml-auto mr-[3px]">
              <path d="M12 0v12H0z" fill="#b4b4b4" />
            </svg>
          </th>
          <th className={head}>A</th>
          <th className={head}>B</th>
          <th className={head}>C</th>
          <th className={head}>D</th>
          <th className={head}>E</th>
          <th className={`border-r border-r-[#ababab] ${plain}`}>F</th>
          <th className={plain} />
        </tr>
      </thead>
      <tbody>
        <tr className="h-10">
          <RowHead nr={1} />
          <td className={top}>Aktivitäten</td>
          <td className={`text-right ${top}`}>Pax</td>
          <td className={`text-right ${top}`}>
            Kosten
            <br />
            pro Person
          </td>
          <td className={`text-right ${top}`}>Bemerkungen</td>
          <td className={`text-right ${top}`}>Total</td>
          <td className="border-b border-r border-b-[#8c8c8c] border-r-[#d4d4d4] p-0" />
          <td className="border-b border-[#8c8c8c] p-0" />
        </tr>
        {rows.map((row) => (
          <SheetRow key={row.nr} row={row} />
        ))}
        <tr className="h-5">
          <RowHead nr={13} active />
          <td className="border-t border-t-white bg-[#808080] px-[2px] py-0 font-semibold leading-[19px]">Total Rahmenprogramm:</td>
          <td className={sum} />
          <td className={sum} />
          <td className={sum} />
          <td className={`border-r-2 border-r-[#217346] text-right ${sum}`}>CHF 7’355.00</td>
          <td className="border-r border-[#d4d4d4] p-0" />
          <td />
        </tr>
      </tbody>
    </table>
  );
}

function ArrowBox({ label, d }: { label: string; d: string }) {
  return (
    <button aria-label={label} className="flex h-[15px] w-[15px] shrink-0 items-center justify-center border border-[#ababab] bg-white">
      <svg width="7" height="7" viewBox="0 0 7 7" fill="#666">
        <path d={d} />
      </svg>
    </button>
  );
}

function ExcelWindow() {
  return (
    <div className="absolute bottom-0 left-[62px] right-[26px] top-[178px] flex flex-col bg-[#217346] shadow-[0_0_8px_rgba(0,0,0,0.7)]">
      <TitleBar />
      <MenuBar />
      <div className="flex min-h-0 flex-1 flex-col border-x border-b border-x-[#217346] border-b-[#222] bg-[#e6e6e6]">
        <Ribbon />
        <FormulaBar />
        <div className="flex min-h-0 flex-1">
          <div className="min-w-0 flex-1 overflow-hidden border-b border-r border-[#999]">
            <Sheet />
          </div>
          <div className="flex w-[21px] shrink-0 flex-col pl-[3px] pr-[3px] pt-0.5">
            <ArrowBox label="Nach oben" d="M0 5h7L3.500 1.500z" />
            <div className="w-[15px] flex-1 bg-[#dadada]">
              <div className="h-[115px] border border-[#ababab] bg-white" />
            </div>
            <ArrowBox label="Nach unten" d="M0 2h7L3.500 5.500z" />
          </div>
        </div>
        <div className="flex h-6 shrink-0 items-center">
          <div className="flex w-[99px] items-center gap-6 pl-[26px]">
            <svg width="5" height="7" viewBox="0 0 5 7" fill="#bbb">
              <path d="M5 0v7L0 3.500z" />
            </svg>
            <svg width="5" height="7" viewBox="0 0 5 7" fill="#bbb">
              <path d="M0 0v7l5-3.500z" />
            </svg>
          </div>
          <button className="h-6 w-[94px] border-x border-b-2 border-x-[#ababab] border-b-[#217346] bg-white text-[13px] font-semibold text-[#217346]">
            Kalkulation
          </button>
          <button aria-label="Neues Blatt" className="ml-8">
            <svg width="17" height="17" viewBox="0 0 17 17" fill="none" stroke="#777">
              <circle cx="8.500" cy="8.500" r="7.500" />
              <path d="M8.500 4.500v8M4.500 8.500h8" strokeWidth="1.600" />
            </svg>
          </button>
          <svg width="2" height="12" viewBox="0 0 2 12" fill="#999" className="ml-auto mr-[15px]">
            <path d="M0 0h2v2H0zM0 5h2v2H0zM0 10h2v2H0z" />
          </svg>
          <div className="mr-[22px] mt-0.5 flex w-[380px]">
            <ArrowBox label="Nach links" d="M5 0v7L1.500 3.500z" />
            <div className="flex flex-1 bg-[#dadada]">
              <div className="h-[15px] w-[185px] border border-[#ababab] bg-white" />
            </div>
            <ArrowBox label="Nach rechts" d="M2 0v7l3.500-3.500z" />
          </div>
        </div>
      </div>
    </div>
  );
}

/*-------------------- Root ----------------------*/
export default function App() {
  return (
    <main className="relative h-screen overflow-hidden bg-white font-['Open_Sans','Noto_Sans',sans-serif] text-[11px] leading-4 text-black">
      <OfficeApp />
      <ExcelWindow />
    </main>
  );
}
